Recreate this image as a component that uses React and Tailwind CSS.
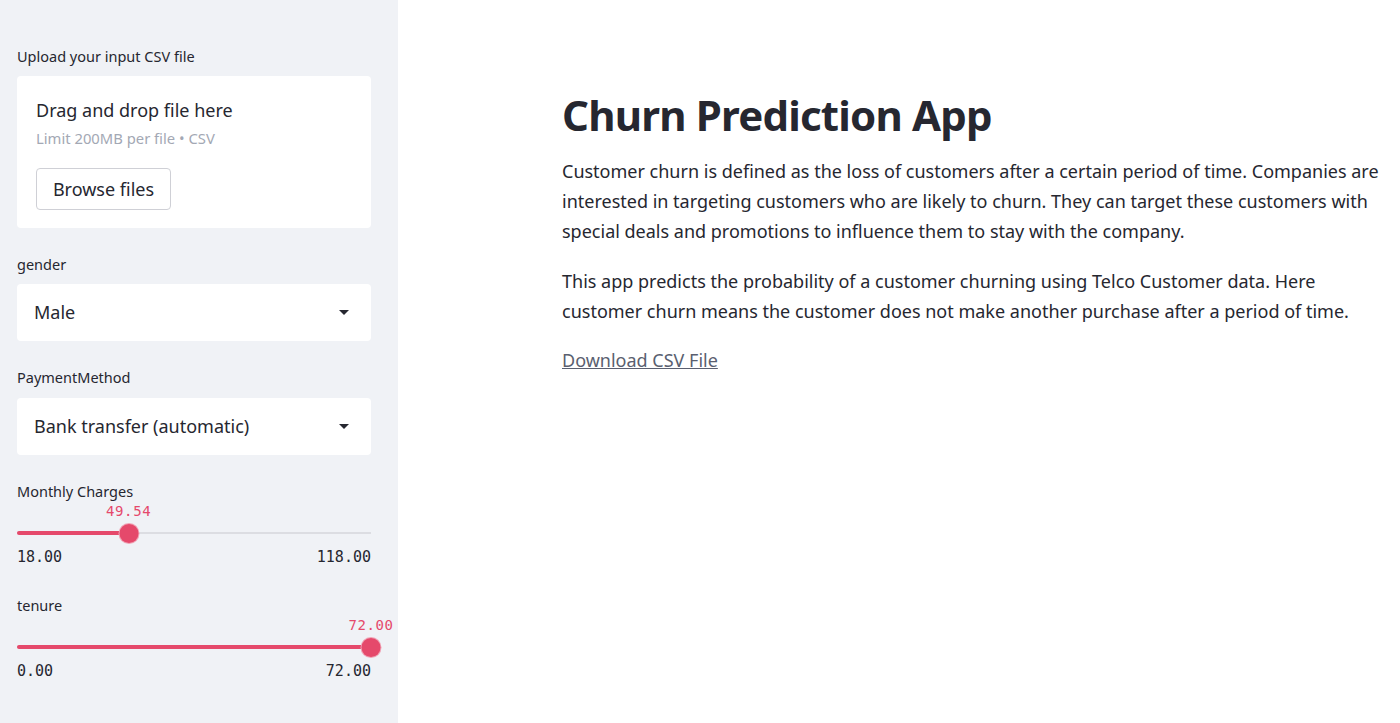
import React from 'react';

const FONT = { fontFamily: '"Noto Sans", "Open Sans", sans-serif' };
const MONO = { fontFamily: '"DejaVu Sans Mono", "Liberation Mono", monospace' };

const Caret = () => (
    <svg width="10" height="6" viewBox="0 0 10 6" className="mr-[22px]">
        <path d="M0 0 L10 0 L5 5 Z" fill="#262730" />
    </svg>
);

const SelectBox = ({ value }) => (
    <div className="h-[57px] bg-white rounded-[4px] flex items-center justify-between pl-[17px] text-[18px] text-[#262730]">
        <span>{value}</span>
        <Caret />
    </div>
);

const Slider = ({ min, max, value, fmt }) => {
    const pct = ((value - min) / (max - min)) * 100;
    return (
        <div>
            <div className="relative h-[20px]">
                <span
                    className="absolute top-0 -translate-x-1/2 text-[14px] leading-[20px] tracking-[0.6px] text-[#e5496b] whitespace-nowrap"
                    style={{ left: `${pct}%`, ...MONO }}
                >
                    {fmt(value)}
                </span>
            </div>
            <div className="relative h-[24px] flex items-center">
                <div className="w-full h-[2px] bg-[#dcdde2]" />
                <div className="absolute left-0 h-[4px] rounded-full bg-[#e5496b]" style={{ width: `${pct}%` }} />
                <div
                    className="absolute w-[19px] h-[19px] -translate-x-1/2 rounded-full bg-[#e5496b] ring-1 ring-[#f0a3b5]"
                    style={{ left: `${pct}%` }}
                />
            </div>
            <div className="mt-[2px] flex justify-between text-[15px] leading-[20px] text-[#262730]" style={MONO}>
                <span>{fmt(min)}</span>
                <span>{fmt(max)}</span>
            </div>
        </div>
    );
};

const Sidebar = () => {
    const fmt = (v) => v.toFixed(2);
    return (
        <div className="w-[398px] shrink-0 bg-[#f0f2f6] min-h-[723px]">
            <div className="pl-[17px] pt-[46px]">
                <div className="w-[354px]">
                    <div className="text-[14.5px] leading-[20px] text-[#262730]">Upload your input CSV file</div>
                    <div className="mt-[10px] h-[152px] bg-white rounded-[4px] pl-[19px] pt-[22px]">
                        <div className="text-[18px] leading-[24px] text-[#262730]">Drag and drop file here</div>
                        <div className="mt-[6px] text-[14.8px] leading-[20px] text-[#a3a8b4]">Limit 200MB per file • CSV</div>
                        <button className="mt-[20px] h-[42px] w-[135px] border border-[#cfd0d6] rounded-[4px] bg-white text-[18px] text-[#262730]">
                            Browse files
                        </button>
                    </div>

                    <div className="mt-[26px] text-[14.5px] leading-[20px] text-[#262730]">gender</div>
                    <div className="mt-[10px]">
                        <SelectBox value="Male" />
                    </div>

                    <div className="mt-[26px] text-[14.5px] leading-[20px] text-[#262730]">PaymentMethod</div>
                    <div className="mt-[11px]">
                        <SelectBox value="Bank transfer (automatic)" />
                    </div>

                    <div className="mt-[26px] text-[14.5px] leading-[20px] text-[#262730]">Monthly Charges</div>
                    <Slider min={18} max={118} value={49.54} fmt={fmt} />

                    <div className="mt-[28px] text-[14.5px] leading-[20px] text-[#262730]">tenure</div>
                    <Slider min={0} max={72} value={72} fmt={fmt} />
                </div>
            </div>
        </div>
    );
};

export default function App() {
    return (
        <div className="flex w-[1400px] min-h-[723px] bg-white overflow-hidden" style={FONT}>
            <Sidebar />
            <main className="pl-[164px] pt-[85px] text-[#262730] whitespace-nowrap">
                <h1 className="text-[42px] leading-[60px] font-bold tracking-[-0.8px]">Churn Prediction App</h1>
                <p className="mt-[11px] text-[18px] leading-[30px]">
                    Customer churn is defined as the loss of customers after a certain period of time. Companies are
                    <br />
                    interested in targeting customers who are likely to churn. They can target these customers with
                    <br />
                    special deals and promotions to influence them to stay with the company.
                </p>
                <p className="mt-[20px] text-[18px] leading-[30px]">
                    This app predicts the probability of a customer churning using Telco Customer data. Here
                    <br />
                    customer churn means the customer does not make another purchase after a period of time.
                </p>
                <a href="#" className="block mt-[19px] text-[18px] leading-[30px] text-[#5a5f70] underline">
                    Download CSV File
                </a>
            </main>
        </div>
    );
}
